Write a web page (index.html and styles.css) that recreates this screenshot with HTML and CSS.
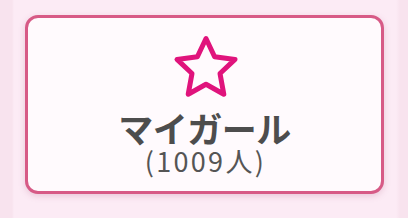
FILE: index.html
```html
<!DOCTYPE html>
<html lang="ja">
<head>
<meta charset="utf-8">
<link rel="stylesheet" href="styles.css">
</head>
<body>
<div class="page">
  <div class="card">
    <svg class="star" width="68" height="68" viewBox="0 0 68 68" aria-hidden="true">
      <path d="M34 3.5 L42.6 21.8 L63 24.4 L48 38.5 L51.8 59.2 L34 49.2 L16.2 59.2 L20 38.5 L5 24.4 L25.4 21.8 Z" fill="none" stroke="#e0137c" stroke-width="5" stroke-linejoin="round"/>
    </svg>
    <div class="title">マイガール</div>
    <div class="count">(1009人)</div>
  </div>
</div>
</body>
</html>
```
FILE: styles.css
```css
html, body {
  margin: 0;
  padding: 0;
}
body {
  width: 408px;
  height: 218px;
  background: linear-gradient(to right, #f8e3ee 0, #f8e3ee 12px, #fcebf5 14px, #fcebf5 396px, #f8e3ee 400px);
  font-family: "Noto Sans CJK JP", "Noto Sans", sans-serif;
  overflow: hidden;
}
.page {
  padding: 15px 24px 24px 25px;
}
.card {
  box-sizing: border-box;
  width: 359px;
  height: 179px;
  border: 3px solid #d75a86;
  border-radius: 13px;
  background: #fffafd;
  box-shadow: 0 2px 6px rgba(180, 90, 130, 0.25);
  display: flex;
  flex-direction: column;
  align-items: center;
  padding-top: 17px;
}
.star {
  display: block;
  margin-left: 2px;
}
.title {
  font-size: 35px;
  font-weight: 700;
  color: #4d4d4d;
  line-height: 36px;
  margin-top: 7px;
  letter-spacing: -0.5px;
}
.count {
  font-family: "Noto Sans CJK JP", "Noto Sans", sans-serif;
  font-size: 27px;
  color: #555;
  line-height: 28px;
  margin-top: 1px;
  letter-spacing: 2.3px;
  padding-left: 2px;
}
```
